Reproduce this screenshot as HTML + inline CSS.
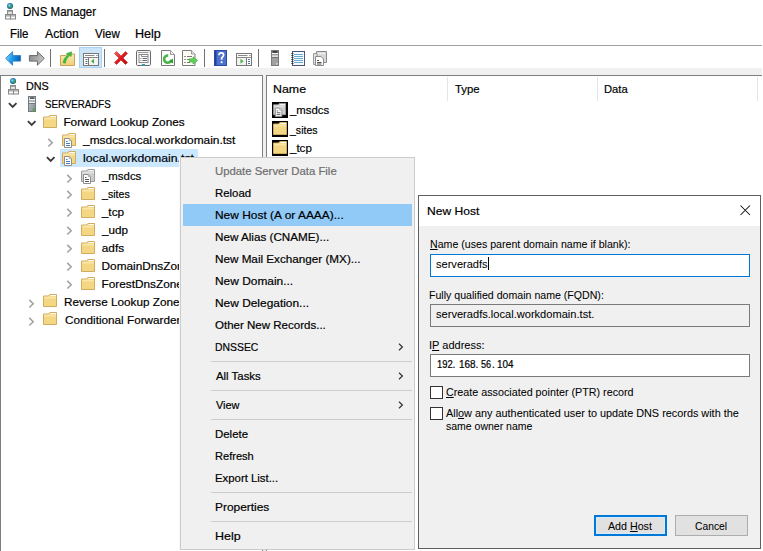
<!DOCTYPE html>
<html><head><meta charset="utf-8"><style>
html,body{margin:0;padding:0;}
body{width:763px;height:551px;overflow:hidden;position:relative;background:#fff;font-family:"Liberation Sans",sans-serif;}
.t{position:absolute;white-space:nowrap;-webkit-text-stroke:0.2px currentColor;}
.d{-webkit-text-stroke:0.05px currentColor;}
.r{position:absolute;}
u{text-decoration:underline;text-underline-offset:1px;}
</style></head><body>
<svg class="r" style="left:5px;top:3px" width="12" height="17" viewBox="0 0 12 17"><defs><radialGradient id="dg1" cx="0.4" cy="0.4" r="0.6"><stop offset="0" stop-color="#8fe0f0"/><stop offset="0.5" stop-color="#2f8cc0"/><stop offset="1" stop-color="#14506a"/></radialGradient></defs><circle cx="5" cy="3" r="3" fill="url(#dg1)"/><path d="M6.5 1.5L7.6 2.6L6.8 4.2L5.6 5.5L5 4.2Z" fill="#3fb04a" opacity="0.9"/><rect x="2.5" y="7.5" width="5" height="3.5" fill="#dcdcdc" stroke="#8a8a8a"/><path d="M3.5 8.6h1M5.5 8.6h1" stroke="#555" stroke-width="0.9"/><path d="M3.2 10.1h3.6" stroke="#fff"/><rect x="0.5" y="11.5" width="5" height="4.5" fill="#dcdcdc" stroke="#8a8a8a"/><path d="M1.5 12.8h1M3.5 12.8h1" stroke="#555" stroke-width="0.9"/><path d="M1.2 14.5h3.6" stroke="#fff" stroke-width="1.2"/><rect x="5.5" y="11.5" width="5" height="4.5" fill="#dcdcdc" stroke="#8a8a8a"/><path d="M6.5 12.8h1M8.5 12.8h1" stroke="#555" stroke-width="0.9"/><path d="M6.2 14.5h3.6" stroke="#fff" stroke-width="1.2"/></svg>
<div class="t" style="left:22.64px;top:3.94px;font-size:12px;line-height:17px;color:#000;transform:scaleX(0.9613);transform-origin:0 0;">DNS Manager</div>
<div class="t" style="left:9.64px;top:26.14px;font-size:12px;line-height:17px;color:#000;transform:scaleX(0.9556);transform-origin:0 0;">File</div>
<div class="t" style="left:44.80px;top:26.14px;font-size:12px;line-height:17px;color:#000;transform:scaleX(1.0152);transform-origin:0 0;">Action</div>
<div class="t" style="left:94.80px;top:26.14px;font-size:12px;line-height:17px;color:#000;transform:scaleX(0.9615);transform-origin:0 0;">View</div>
<div class="t" style="left:135.25px;top:26.14px;font-size:12px;line-height:17px;color:#000;transform:scaleX(1.0478);transform-origin:0 0;">Help</div>
<div class="r" style="left:0px;top:45px;width:762px;height:1px;background:#a0a0a0"></div>
<div class="r" style="left:0px;top:68px;width:762px;height:7px;background:#f0f0f0"></div>
<div class="r" style="left:0px;top:75px;width:263px;height:476px;background:#fff;border-left:1px solid #7f7f7f;border-top:1px solid #7f7f7f;border-right:1px solid #7f7f7f;box-sizing:border-box"></div>
<div class="r" style="left:263px;top:75px;width:3px;height:476px;background:#f0f0f0"></div>
<div class="r" style="left:266px;top:75px;width:496px;height:476px;background:#fff;border-left:1px solid #7f7f7f;border-top:1px solid #7f7f7f;box-sizing:border-box"></div>
<svg class="r" style="left:5px;top:51px" width="17" height="15" viewBox="0 0 17 15"><defs><linearGradient id="gb" x1="0" y1="0" x2="1" y2="0.3"><stop offset="0" stop-color="#a8e6ff"/><stop offset="0.45" stop-color="#23a6ee"/><stop offset="1" stop-color="#0660b8"/></linearGradient></defs><path d="M0.7 7.3L7.6 0.7V4.6H15.6V10.1H7.6V14.2Z" fill="url(#gb)" stroke="#3d82c4" stroke-width="1" stroke-linejoin="round"/></svg>
<svg class="r" style="left:28px;top:51px" width="17" height="15" viewBox="0 0 17 15"><defs><linearGradient id="gg" x1="0" y1="0" x2="1" y2="0.3"><stop offset="0" stop-color="#8a8a8a"/><stop offset="0.6" stop-color="#a9a9a9"/><stop offset="1" stop-color="#c8c8c8"/></linearGradient></defs><path d="M16.3 7.3L9.4 0.7V4.6H1.4V10.1H9.4V14.2Z" fill="url(#gg)" stroke="#666" stroke-width="1" stroke-linejoin="round"/></svg>
<div class="r" style="left:50px;top:49px;width:1px;height:18px;background:#6f6f6f"></div>
<svg class="r" style="left:60px;top:50px" width="15" height="16" viewBox="0 0 15 16"><defs><linearGradient id="gf" x1="0" y1="0" x2="0" y2="1"><stop offset="0" stop-color="#fbeab4"/><stop offset="1" stop-color="#f0cf78"/></linearGradient></defs><path d="M0.5 5.5H6L7.2 4H14.5V15.5H0.5Z" fill="url(#gf)" stroke="#c8a25a"/><path d="M3.2 12.8C3.6 9 5.5 6.5 7.8 5.2L6.6 3.6L11.6 1.8L11.2 6.6L9.9 5.6C8 6.9 6 9.4 5.4 13.2Z" fill="#3dbf3a" stroke="#2a9a2a" stroke-width="0.5"/></svg>
<div class="r" style="left:79px;top:47px;width:23px;height:21px;background:#cce4f7;border:1px solid #a8d3f5;box-sizing:border-box"></div>
<svg class="r" style="left:83px;top:53px" width="16" height="13" viewBox="0 0 16 13"><rect x="0.5" y="0.5" width="15" height="12" fill="#fff" stroke="#777"/><path d="M2 2.5H11.5M13 2.5H13.8M14.2 2.5H14.8" stroke="#888"/><path d="M1 4.5H15" stroke="#888"/><path d="M5.5 5V12" stroke="#777"/><path d="M2.5 6.5h2M2.5 8.5h2M2.5 10.5h2" stroke="#6a6a6a"/><rect x="6" y="5" width="9" height="7" fill="#f4f4f4"/><path d="M11 5.8L8 8.3L11 10.8Z" fill="#46b040"/></svg>
<div class="r" style="left:104px;top:49px;width:1px;height:18px;background:#6f6f6f"></div>
<svg class="r" style="left:113px;top:50px" width="16" height="16" viewBox="0 0 16 16"><defs><linearGradient id="gr" x1="0" y1="0" x2="1" y2="1"><stop offset="0" stop-color="#f46a6a"/><stop offset="0.5" stop-color="#e01818"/><stop offset="1" stop-color="#b50a0a"/></linearGradient></defs><path d="M1.5 3.5L3.5 1.5L8 6L12.5 1.5L14.5 3.5L10 8L14.5 12.5L12.5 14.5L8 10L3.5 14.5L1.5 12.5L6 8Z" fill="url(#gr)" stroke="#c42020" stroke-width="0.6" stroke-linejoin="round"/></svg>
<svg class="r" style="left:136px;top:50px" width="15" height="16" viewBox="0 0 15 16"><rect x="0.5" y="0.5" width="14" height="15" rx="1.2" fill="#f6f6f6" stroke="#6a6a6a"/><path d="M2 2.5H12.5" stroke="#9a9a9a"/><rect x="3" y="4.5" width="9" height="8" fill="#fff" stroke="#8a8a8a"/><path d="M5.5 4.5V6.5H12" stroke="#8a8a8a" fill="none"/><path d="M4.5 8.5h0.8M6.5 8.5h4.5M4.5 10.5h0.8M6.5 10.5h4.5" stroke="#5a6a7a"/><rect x="6" y="14" width="3" height="1.5" fill="#2a9fb8"/></svg>
<svg class="r" style="left:161px;top:50px" width="14" height="16" viewBox="0 0 14 16"><path d="M0.5 0.5H9.5L13.5 4.5V15.5H0.5Z" fill="#fff" stroke="#7a7a7a"/><path d="M9.5 0.5V4.5H13.5" fill="#f0f0f0" stroke="#9a9a9a"/><path d="M10.3 9.6A3.6 3.6 0 1 1 7.2 5.6" fill="none" stroke="#45b545" stroke-width="2.6"/><path d="M8.2 11.6L12.2 13.4L11.9 8.8Z" fill="#2f9a2f"/></svg>
<svg class="r" style="left:182px;top:50px" width="16" height="16" viewBox="0 0 16 16"><path d="M0.5 0.5H9.5L13 4V15.5H0.5Z" fill="#fffdf2" stroke="#7a7a7a"/><path d="M9.5 0.5V4H13" fill="#f0f0f0" stroke="#9a9a9a"/><path d="M2.5 6.5h1M2.5 9.5h1M2.5 12.5h1" stroke="#222"/><path d="M5 6.5h5M5 9.5h3M5 12.5h3" stroke="#777"/><path d="M7.5 8.8H11V6.8L15.6 10.4L11 14V12H7.5Z" fill="#5ed35a" stroke="#37a637" stroke-width="0.6"/></svg>
<div class="r" style="left:204px;top:49px;width:1px;height:18px;background:#6f6f6f"></div>
<svg class="r" style="left:214px;top:50px" width="13" height="16" viewBox="0 0 13 16"><rect x="0" y="0" width="13" height="16" fill="#4e72cc"/><rect x="0" y="0" width="2.5" height="16" fill="#23409a"/><rect x="0.5" y="0.5" width="12" height="15" fill="none" stroke="#2a4aa6"/><path d="M5 5.2C5 3.6 6 2.8 7.3 2.8C8.6 2.8 9.6 3.7 9.6 5C9.6 6.6 7.8 7.1 7.6 8.6V9.8" fill="none" stroke="#fff" stroke-width="1.7"/><rect x="6.7" y="11.3" width="1.8" height="1.8" fill="#fff"/></svg>
<svg class="r" style="left:236px;top:53px" width="16" height="13" viewBox="0 0 16 13"><rect x="0.5" y="0.5" width="15" height="12" fill="#fff" stroke="#777"/><path d="M2 2.5H11.5M13 2.5H13.8M14.2 2.5H14.8" stroke="#888"/><path d="M1 4.5H15" stroke="#888"/><rect x="1" y="5" width="9" height="7" fill="#f2f2f2"/><path d="M10.5 5V12" stroke="#777"/><path d="M12 6.5h2M12 8.5h2M12 10.5h2" stroke="#4a7aa8"/><path d="M4.5 5.8L7.5 8.3L4.5 10.8Z" fill="#46b040"/></svg>
<div class="r" style="left:258px;top:49px;width:1px;height:18px;background:#6f6f6f"></div>
<svg class="r" style="left:271px;top:50px" width="8" height="16" viewBox="0 0 8 16"><rect x="0" y="0" width="8" height="16" fill="#a0a0a0"/><rect x="0.5" y="0.5" width="7" height="15" fill="none" stroke="#7a7a7a"/><rect x="1.5" y="1.2" width="5" height="1.5" fill="#222"/><rect x="1" y="3" width="6" height="1.4" fill="#fafafa"/><rect x="1" y="4.6" width="6" height="0.6" fill="#555"/><rect x="1" y="5.4" width="6" height="1.4" fill="#f0f0f0"/><rect x="1" y="7" width="6" height="0.6" fill="#555"/><rect x="5" y="13" width="1.5" height="1.5" fill="#ddd"/></svg>
<svg class="r" style="left:291px;top:51px" width="14" height="15" viewBox="0 0 14 15"><rect x="1.5" y="0.5" width="12" height="14" fill="#f4fbff" stroke="#4a5578"/><path d="M3 3.5h9M3 5.5h9M3 7.5h9M3 9.5h9M3 11.5h9" stroke="#6aa8cc"/><path d="M0.3 2.5h2.2M0.3 4.5h2.2M0.3 6.5h2.2M0.3 8.5h2.2M0.3 10.5h2.2M0.3 12.5h2.2" stroke="#333" stroke-width="0.9"/></svg>
<svg class="r" style="left:313px;top:51px" width="14" height="15" viewBox="0 0 14 15"><path d="M3.5 0.5H13.5V11.5H3.5Z" fill="#d8d8d8" stroke="#8a8a8a"/><path d="M5 2.5H12" stroke="#f4f4f4"/><path d="M0.5 2.5H4V13.5H0.5Z" fill="#e4e4e4" stroke="#9a9a9a"/><path d="M2.5 5.5H8L10.5 8V14.5H2.5Z" fill="#fff" stroke="#8a8a8a"/><path d="M4 9.5h2M4 11.5h4.5M4 13h4.5" stroke="#555"/></svg>
<div class="r" style="left:60px;top:149px;width:138px;height:18px;background:#cce8ff"></div>
<svg class="r" style="left:8px;top:78px" width="12" height="17" viewBox="0 0 12 17"><defs><radialGradient id="dg2" cx="0.4" cy="0.4" r="0.6"><stop offset="0" stop-color="#8fe0f0"/><stop offset="0.5" stop-color="#2f8cc0"/><stop offset="1" stop-color="#14506a"/></radialGradient></defs><circle cx="5" cy="3" r="3" fill="url(#dg2)"/><path d="M6.5 1.5L7.6 2.6L6.8 4.2L5.6 5.5L5 4.2Z" fill="#3fb04a" opacity="0.9"/><rect x="2.5" y="7.5" width="5" height="3.5" fill="#dcdcdc" stroke="#8a8a8a"/><path d="M3.5 8.6h1M5.5 8.6h1" stroke="#555" stroke-width="0.9"/><path d="M3.2 10.1h3.6" stroke="#fff"/><rect x="0.5" y="11.5" width="5" height="4.5" fill="#dcdcdc" stroke="#8a8a8a"/><path d="M1.5 12.8h1M3.5 12.8h1" stroke="#555" stroke-width="0.9"/><path d="M1.2 14.5h3.6" stroke="#fff" stroke-width="1.2"/><rect x="5.5" y="11.5" width="5" height="4.5" fill="#dcdcdc" stroke="#8a8a8a"/><path d="M6.5 12.8h1M8.5 12.8h1" stroke="#555" stroke-width="0.9"/><path d="M6.2 14.5h3.6" stroke="#fff" stroke-width="1.2"/></svg>
<div class="t" style="left:25.68px;top:77.71px;font-size:11.8px;line-height:17px;color:#000;transform:scaleX(0.9167);transform-origin:0 0;">DNS</div>
<svg class="r" style="left:8px;top:102px" width="10" height="7" viewBox="0 0 10 7"><path d="M0.9 1.1L4.7 4.9L8.5 1.1" fill="none" stroke="#3a3a3a" stroke-width="1.8"/></svg>
<svg class="r" style="left:28px;top:96px" width="8" height="16" viewBox="0 0 8 16"><defs><linearGradient id="sg" x1="0" y1="0" x2="1" y2="1"><stop offset="0" stop-color="#c5cdd0"/><stop offset="1" stop-color="#7f898d"/></linearGradient></defs><rect x="0.5" y="0.5" width="7" height="15" fill="url(#sg)" stroke="#737b7f"/><rect x="2" y="1.5" width="4" height="1.2" fill="#333"/><rect x="1" y="3" width="6" height="1.6" fill="#f6f8f9"/><rect x="1" y="4.7" width="6" height="0.7" fill="#5a6064"/><rect x="1" y="5.6" width="6" height="1.6" fill="#eef1f2"/><rect x="1" y="7.3" width="6" height="0.7" fill="#5a6064"/><rect x="4.8" y="12.6" width="2" height="2" fill="#49a843"/></svg>
<div class="t" style="left:45.20px;top:95.71px;font-size:11.8px;line-height:17px;color:#000;transform:scaleX(0.8237);transform-origin:0 0;">SERVERADFS</div>
<svg class="r" style="left:27px;top:120px" width="10" height="7" viewBox="0 0 10 7"><path d="M0.9 1.1L4.7 4.9L8.5 1.1" fill="none" stroke="#3a3a3a" stroke-width="1.8"/></svg>
<svg class="r" style="left:43px;top:115px" width="14" height="13" viewBox="0 0 14 13"><path d="M0.5 2H5.5L6.8 0.5H13.5V12.5H0.5Z" fill="#f3d782" stroke="#d0ab60"/><path d="M1 2.6H13V4.5H1Z" fill="#fbe9b2" opacity="0.8"/><path d="M7.8 1.1H12.9V2.1H7.2Z" fill="#fff"/></svg>
<div class="t" style="left:63.40px;top:113.71px;font-size:11.8px;line-height:17px;color:#000;">Forward Lookup Zones</div>
<svg class="r" style="left:47px;top:138px" width="7" height="10" viewBox="0 0 7 10"><path d="M1.3 0.9L5.2 4.7L1.3 8.5" fill="none" stroke="#a3a3a3" stroke-width="1.6"/></svg>
<svg class="r" style="left:62px;top:133px" width="15" height="15" viewBox="0 0 15 15"><path d="M0.5 2H5.5L6.8 0.5H13.5V12.5H0.5Z" fill="#f3d782" stroke="#d0ab60"/><path d="M1 2.6H13V4.5H1Z" fill="#fbe9b2" opacity="0.8"/><path d="M7.8 1.1H12.9V2.1H7.2Z" fill="#fff"/><path d="M2.5 5.5H7.3L9.5 7.7V14.5H2.5Z" fill="#fff" stroke="#8e8e8e"/><path d="M7.3 5.5V7.7H9.5" fill="#e8e8e8" stroke="#a8a8a8"/><path d="M4 8.5H5.5M4 10.5H8M4 12.5H8" stroke="#3d7fc1"/></svg>
<div class="t" style="left:83.00px;top:131.71px;font-size:11.8px;line-height:17px;color:#000;transform:scaleX(1.0106);transform-origin:0 0;">_msdcs.local.workdomain.tst</div>
<svg class="r" style="left:46px;top:156px" width="10" height="7" viewBox="0 0 10 7"><path d="M0.9 1.1L4.7 4.9L8.5 1.1" fill="none" stroke="#3a3a3a" stroke-width="1.8"/></svg>
<svg class="r" style="left:62px;top:151px" width="15" height="15" viewBox="0 0 15 15"><path d="M0.5 2H5.5L6.8 0.5H13.5V12.5H0.5Z" fill="#f3d782" stroke="#d0ab60"/><path d="M1 2.6H13V4.5H1Z" fill="#fbe9b2" opacity="0.8"/><path d="M7.8 1.1H12.9V2.1H7.2Z" fill="#fff"/><path d="M2.5 5.5H7.3L9.5 7.7V14.5H2.5Z" fill="#fff" stroke="#8e8e8e"/><path d="M7.3 5.5V7.7H9.5" fill="#e8e8e8" stroke="#a8a8a8"/><path d="M4 8.5H5.5M4 10.5H8M4 12.5H8" stroke="#3d7fc1"/></svg>
<div class="t" style="left:82.76px;top:149.71px;font-size:11.8px;line-height:17px;color:#000;transform:scaleX(1.0377);transform-origin:0 0;">local.workdomain.tst</div>
<svg class="r" style="left:66px;top:174px" width="7" height="10" viewBox="0 0 7 10"><path d="M1.3 0.9L5.2 4.7L1.3 8.5" fill="none" stroke="#a3a3a3" stroke-width="1.6"/></svg>
<svg class="r" style="left:81px;top:169px" width="15" height="15" viewBox="0 0 15 15"><path d="M0.5 2H5.5L6.8 0.5H13.5V12.5H0.5Z" fill="#cdcdcd" stroke="#9c9c9c"/><path d="M1 2.6H13V4.5H1Z" fill="#e6e6e6" opacity="0.8"/><path d="M7.8 1.1H12.9V2.1H7.2Z" fill="#f4f4f4"/><path d="M2.5 5.5H7.3L9.5 7.7V14.5H2.5Z" fill="#fff" stroke="#8e8e8e"/><path d="M7.3 5.5V7.7H9.5" fill="#e8e8e8" stroke="#a8a8a8"/><path d="M4 8.5H5.5M4 10.5H8M4 12.5H8" stroke="#555"/></svg>
<div class="t" style="left:101.80px;top:167.71px;font-size:11.8px;line-height:17px;color:#000;transform:scaleX(0.9675);transform-origin:0 0;">_msdcs</div>
<svg class="r" style="left:66px;top:189.7px" width="7" height="10" viewBox="0 0 7 10"><path d="M1.3 0.9L5.2 4.7L1.3 8.5" fill="none" stroke="#a3a3a3" stroke-width="1.6"/></svg>
<svg class="r" style="left:81px;top:187.2px" width="14" height="13" viewBox="0 0 14 13"><path d="M0.5 2H5.5L6.8 0.5H13.5V12.5H0.5Z" fill="#f3d782" stroke="#d0ab60"/><path d="M1 2.6H13V4.5H1Z" fill="#fbe9b2" opacity="0.8"/><path d="M7.8 1.1H12.9V2.1H7.2Z" fill="#fff"/></svg>
<div class="t" style="left:101.80px;top:185.71px;font-size:11.8px;line-height:17px;color:#000;transform:scaleX(0.9000);transform-origin:0 0;">_sites</div>
<svg class="r" style="left:66px;top:207.7px" width="7" height="10" viewBox="0 0 7 10"><path d="M1.3 0.9L5.2 4.7L1.3 8.5" fill="none" stroke="#a3a3a3" stroke-width="1.6"/></svg>
<svg class="r" style="left:81px;top:205.2px" width="14" height="13" viewBox="0 0 14 13"><path d="M0.5 2H5.5L6.8 0.5H13.5V12.5H0.5Z" fill="#f3d782" stroke="#d0ab60"/><path d="M1 2.6H13V4.5H1Z" fill="#fbe9b2" opacity="0.8"/><path d="M7.8 1.1H12.9V2.1H7.2Z" fill="#fff"/></svg>
<div class="t" style="left:101.80px;top:203.71px;font-size:11.8px;line-height:17px;color:#000;">_tcp</div>
<svg class="r" style="left:66px;top:225.7px" width="7" height="10" viewBox="0 0 7 10"><path d="M1.3 0.9L5.2 4.7L1.3 8.5" fill="none" stroke="#a3a3a3" stroke-width="1.6"/></svg>
<svg class="r" style="left:81px;top:223.2px" width="14" height="13" viewBox="0 0 14 13"><path d="M0.5 2H5.5L6.8 0.5H13.5V12.5H0.5Z" fill="#f3d782" stroke="#d0ab60"/><path d="M1 2.6H13V4.5H1Z" fill="#fbe9b2" opacity="0.8"/><path d="M7.8 1.1H12.9V2.1H7.2Z" fill="#fff"/></svg>
<div class="t" style="left:101.80px;top:221.71px;font-size:11.8px;line-height:17px;color:#000;transform:scaleX(0.9923);transform-origin:0 0;">_udp</div>
<svg class="r" style="left:66px;top:243.7px" width="7" height="10" viewBox="0 0 7 10"><path d="M1.3 0.9L5.2 4.7L1.3 8.5" fill="none" stroke="#a3a3a3" stroke-width="1.6"/></svg>
<svg class="r" style="left:81px;top:241.2px" width="14" height="13" viewBox="0 0 14 13"><path d="M0.5 2H5.5L6.8 0.5H13.5V12.5H0.5Z" fill="#f3d782" stroke="#d0ab60"/><path d="M1 2.6H13V4.5H1Z" fill="#fbe9b2" opacity="0.8"/><path d="M7.8 1.1H12.9V2.1H7.2Z" fill="#fff"/></svg>
<div class="t" style="left:101.80px;top:239.71px;font-size:11.8px;line-height:17px;color:#000;">adfs</div>
<svg class="r" style="left:66px;top:261.7px" width="7" height="10" viewBox="0 0 7 10"><path d="M1.3 0.9L5.2 4.7L1.3 8.5" fill="none" stroke="#a3a3a3" stroke-width="1.6"/></svg>
<svg class="r" style="left:81px;top:259.2px" width="14" height="13" viewBox="0 0 14 13"><path d="M0.5 2H5.5L6.8 0.5H13.5V12.5H0.5Z" fill="#f3d782" stroke="#d0ab60"/><path d="M1 2.6H13V4.5H1Z" fill="#fbe9b2" opacity="0.8"/><path d="M7.8 1.1H12.9V2.1H7.2Z" fill="#fff"/></svg>
<div class="t" style="left:101.60px;top:257.71px;font-size:11.8px;line-height:17px;color:#000;">DomainDnsZones</div>
<svg class="r" style="left:66px;top:279.7px" width="7" height="10" viewBox="0 0 7 10"><path d="M1.3 0.9L5.2 4.7L1.3 8.5" fill="none" stroke="#a3a3a3" stroke-width="1.6"/></svg>
<svg class="r" style="left:81px;top:277.2px" width="14" height="13" viewBox="0 0 14 13"><path d="M0.5 2H5.5L6.8 0.5H13.5V12.5H0.5Z" fill="#f3d782" stroke="#d0ab60"/><path d="M1 2.6H13V4.5H1Z" fill="#fbe9b2" opacity="0.8"/><path d="M7.8 1.1H12.9V2.1H7.2Z" fill="#fff"/></svg>
<div class="t" style="left:101.60px;top:275.71px;font-size:11.8px;line-height:17px;color:#000;">ForestDnsZones</div>
<svg class="r" style="left:28px;top:299px" width="7" height="10" viewBox="0 0 7 10"><path d="M1.3 0.9L5.2 4.7L1.3 8.5" fill="none" stroke="#a3a3a3" stroke-width="1.6"/></svg>
<svg class="r" style="left:43px;top:294px" width="14" height="13" viewBox="0 0 14 13"><path d="M0.5 2H5.5L6.8 0.5H13.5V12.5H0.5Z" fill="#f3d782" stroke="#d0ab60"/><path d="M1 2.6H13V4.5H1Z" fill="#fbe9b2" opacity="0.8"/><path d="M7.8 1.1H12.9V2.1H7.2Z" fill="#fff"/></svg>
<div class="t" style="left:63.80px;top:293.71px;font-size:11.8px;line-height:17px;color:#000;transform:scaleX(0.9950);transform-origin:0 0;">Reverse Lookup Zones</div>
<svg class="r" style="left:28px;top:317px" width="7" height="10" viewBox="0 0 7 10"><path d="M1.3 0.9L5.2 4.7L1.3 8.5" fill="none" stroke="#a3a3a3" stroke-width="1.6"/></svg>
<svg class="r" style="left:43px;top:312px" width="14" height="13" viewBox="0 0 14 13"><path d="M0.5 2H5.5L6.8 0.5H13.5V12.5H0.5Z" fill="#f3d782" stroke="#d0ab60"/><path d="M1 2.6H13V4.5H1Z" fill="#fbe9b2" opacity="0.8"/><path d="M7.8 1.1H12.9V2.1H7.2Z" fill="#fff"/></svg>
<div class="t" style="left:64.80px;top:311.71px;font-size:11.8px;line-height:17px;color:#000;transform:scaleX(0.9950);transform-origin:0 0;">Conditional Forwarders</div>
<div class="t" style="left:273.35px;top:80.51px;font-size:11.8px;line-height:17px;color:#000;transform:scaleX(1.0500);transform-origin:0 0;">Name</div>
<div class="r" style="left:447px;top:77px;width:1px;height:24px;background:#e5e5e5"></div>
<div class="t" style="left:455.20px;top:81.01px;font-size:11.8px;line-height:17px;color:#000;transform:scaleX(0.9640);transform-origin:0 0;">Type</div>
<div class="r" style="left:597px;top:77px;width:1px;height:24px;background:#e5e5e5"></div>
<div class="t" style="left:603.65px;top:81.01px;font-size:11.8px;line-height:17px;color:#000;transform:scaleX(0.9500);transform-origin:0 0;">Data</div>
<div class="r" style="left:757px;top:77px;width:1px;height:24px;background:#e5e5e5"></div>
<svg class="r" style="left:272px;top:102px" width="16" height="16" viewBox="0 0 16 16"><rect width="16" height="16" fill="#000"/><g transform="translate(1,1) scale(0.93)"><path d="M0.5 2H5.5L6.8 0.5H13.5V12.5H0.5Z" fill="#cdcdcd" stroke="#9c9c9c"/><path d="M1 2.6H13V4.5H1Z" fill="#e6e6e6" opacity="0.8"/><path d="M7.8 1.1H12.9V2.1H7.2Z" fill="#f4f4f4"/><path d="M2.5 5.5H7.3L9.5 7.7V14.5H2.5Z" fill="#fff" stroke="#8e8e8e"/><path d="M7.3 5.5V7.7H9.5" fill="#e8e8e8" stroke="#a8a8a8"/><path d="M4 8.5H5.5M4 10.5H8M4 12.5H8" stroke="#555"/></g></svg>
<div class="t" style="left:290.10px;top:101.81px;font-size:11.8px;line-height:17px;color:#000;transform:scaleX(0.9650);transform-origin:0 0;">_msdcs</div>
<svg class="r" style="left:272px;top:121px" width="16" height="16" viewBox="0 0 16 16"><rect width="16" height="16" fill="#000"/><g transform="translate(1,1) scale(1)"><path d="M0.5 2H5.5L6.8 0.5H13.5V12.5H0.5Z" fill="#f3d782" stroke="#d0ab60"/><path d="M1 2.6H13V4.5H1Z" fill="#fbe9b2" opacity="0.8"/><path d="M7.8 1.1H12.9V2.1H7.2Z" fill="#fff"/></g></svg>
<div class="t" style="left:290.10px;top:121.91px;font-size:11.8px;line-height:17px;color:#000;transform:scaleX(0.8935);transform-origin:0 0;">_sites</div>
<svg class="r" style="left:272px;top:140px" width="16" height="16" viewBox="0 0 16 16"><rect width="16" height="16" fill="#000"/><g transform="translate(1,1) scale(1)"><path d="M0.5 2H5.5L6.8 0.5H13.5V12.5H0.5Z" fill="#f3d782" stroke="#d0ab60"/><path d="M1 2.6H13V4.5H1Z" fill="#fbe9b2" opacity="0.8"/><path d="M7.8 1.1H12.9V2.1H7.2Z" fill="#fff"/></g></svg>
<div class="t" style="left:290.10px;top:139.81px;font-size:11.8px;line-height:17px;color:#000;transform:scaleX(0.9773);transform-origin:0 0;">_tcp</div>
<div class="r" style="left:179px;top:157px;width:1px;height:393px;background:#f7f7f7"></div>
<div class="r" style="left:180px;top:157px;width:235px;height:393px;background:#f0f0f0;border:1px solid #cccccc;box-sizing:border-box"></div>
<div class="r" style="left:183px;top:204px;width:229px;height:22px;background:#91c9f7"></div>
<div class="t" style="left:214.64px;top:162.81px;font-size:11.8px;line-height:17px;color:#6d6d6d;transform:scaleX(0.9616);transform-origin:0 0;">Update Server Data File</div>
<div class="t" style="left:214.64px;top:184.81px;font-size:11.8px;line-height:17px;color:#000;transform:scaleX(0.9639);transform-origin:0 0;">Reload</div>
<div class="t" style="left:214.59px;top:206.81px;font-size:11.8px;line-height:17px;color:#000;transform:scaleX(1.0119);transform-origin:0 0;">New Host (A or AAAA)...</div>
<div class="t" style="left:214.61px;top:228.81px;font-size:11.8px;line-height:17px;color:#000;transform:scaleX(0.9895);transform-origin:0 0;">New Alias (CNAME)...</div>
<div class="t" style="left:214.61px;top:250.81px;font-size:11.8px;line-height:17px;color:#000;transform:scaleX(0.9910);transform-origin:0 0;">New Mail Exchanger (MX)...</div>
<div class="t" style="left:214.59px;top:272.81px;font-size:11.8px;line-height:17px;color:#000;transform:scaleX(1.0105);transform-origin:0 0;">New Domain...</div>
<div class="t" style="left:214.59px;top:294.81px;font-size:11.8px;line-height:17px;color:#000;transform:scaleX(1.0099);transform-origin:0 0;">New Delegation...</div>
<div class="t" style="left:214.90px;top:316.81px;font-size:11.8px;line-height:17px;color:#000;transform:scaleX(0.9770);transform-origin:0 0;">Other New Records...</div>
<div class="t" style="left:214.72px;top:338.81px;font-size:11.8px;line-height:17px;color:#000;transform:scaleX(0.8812);transform-origin:0 0;">DNSSEC</div>
<svg class="r" style="left:398px;top:343.3px" width="6" height="8" viewBox="0 0 6 8"><path d="M1 0.8L4.4 4L1 7.2" fill="none" stroke="#333" stroke-width="1.2"/></svg>
<div class="t" style="left:215.60px;top:367.81px;font-size:11.8px;line-height:17px;color:#000;transform:scaleX(0.9652);transform-origin:0 0;">All Tasks</div>
<svg class="r" style="left:398px;top:372.3px" width="6" height="8" viewBox="0 0 6 8"><path d="M1 0.8L4.4 4L1 7.2" fill="none" stroke="#333" stroke-width="1.2"/></svg>
<div class="t" style="left:215.60px;top:396.81px;font-size:11.8px;line-height:17px;color:#000;transform:scaleX(0.9269);transform-origin:0 0;">View</div>
<svg class="r" style="left:398px;top:401.3px" width="6" height="8" viewBox="0 0 6 8"><path d="M1 0.8L4.4 4L1 7.2" fill="none" stroke="#333" stroke-width="1.2"/></svg>
<div class="t" style="left:214.63px;top:425.81px;font-size:11.8px;line-height:17px;color:#000;transform:scaleX(0.9697);transform-origin:0 0;">Delete</div>
<div class="t" style="left:214.66px;top:447.81px;font-size:11.8px;line-height:17px;color:#000;transform:scaleX(0.9375);transform-origin:0 0;">Refresh</div>
<div class="t" style="left:214.64px;top:469.81px;font-size:11.8px;line-height:17px;color:#000;transform:scaleX(0.9625);transform-origin:0 0;">Export List...</div>
<div class="t" style="left:214.59px;top:498.81px;font-size:11.8px;line-height:17px;color:#000;transform:scaleX(1.0096);transform-origin:0 0;">Properties</div>
<div class="t" style="left:214.54px;top:527.81px;font-size:11.8px;line-height:17px;color:#000;transform:scaleX(1.0565);transform-origin:0 0;">Help</div>
<div class="r" style="left:211px;top:361px;width:201px;height:1px;background:#cdcdcd"></div>
<div class="r" style="left:211px;top:390px;width:201px;height:1px;background:#cdcdcd"></div>
<div class="r" style="left:211px;top:419px;width:201px;height:1px;background:#cdcdcd"></div>
<div class="r" style="left:211px;top:492px;width:201px;height:1px;background:#cdcdcd"></div>
<div class="r" style="left:211px;top:521px;width:201px;height:1px;background:#cdcdcd"></div>
<div class="r" style="left:418px;top:195px;width:343px;height:354px;background:#f0f0f0;border:1px solid #5f5f5f;box-sizing:border-box"></div>
<div class="r" style="left:419px;top:196px;width:341px;height:30px;background:#fff"></div>
<div class="t" style="left:426.58px;top:202.81px;font-size:11.8px;line-height:17px;color:#000;transform:scaleX(1.0220);transform-origin:0 0;">New Host</div>
<svg class="r" style="left:740px;top:205px" width="11" height="11" viewBox="0 0 11 11"><path d="M0.5 0.5L10 10M10 0.5L0.5 10" stroke="#111" stroke-width="1.05"/></svg>
<div class="t d" style="left:430.00px;top:236.86px;font-size:10.5px;line-height:15px;color:#000;transform:scaleX(1.0106);transform-origin:0 0;"><u>N</u>ame (uses parent domain name if blank):</div>
<div class="r" style="left:430px;top:254px;width:320px;height:23px;background:#fff;border:1px solid #0078d7;box-sizing:border-box"></div>
<div class="t d" style="left:435.50px;top:256.96px;font-size:10.5px;line-height:15px;color:#000;transform:scaleX(1.0531);transform-origin:0 0;">serveradfs</div>
<div class="r" style="left:488px;top:257px;width:1px;height:13px;background:#000"></div>
<div class="t d" style="left:428.69px;top:287.86px;font-size:10.5px;line-height:15px;color:#000;transform:scaleX(1.0087);transform-origin:0 0;">Fully qualified domain name (FQDN):</div>
<div class="r" style="left:430px;top:304px;width:320px;height:23px;background:#f0f0f0;border:1px solid #7a7a7a;box-sizing:border-box"></div>
<div class="t d" style="left:435.50px;top:307.26px;font-size:10.5px;line-height:15px;color:#000;transform:scaleX(1.0557);transform-origin:0 0;">serveradfs.local.workdomain.tst.</div>
<div class="t d" style="left:428.65px;top:337.96px;font-size:10.5px;line-height:15px;color:#000;transform:scaleX(1.0490);transform-origin:0 0;">I<u>P</u> address:</div>
<div class="r" style="left:430px;top:354px;width:320px;height:23px;background:#fff;border:1px solid #7a7a7a;box-sizing:border-box"></div>
<div class="t" style="left:437.16px;top:357.84px;font-size:10px;line-height:14px;color:#000;transform:scaleX(0.9400);transform-origin:0 0;">192</div>
<div class="t" style="left:459.21px;top:357.84px;font-size:10px;line-height:14px;color:#000;transform:scaleX(0.9933);transform-origin:0 0;">168</div>
<div class="t" style="left:481.20px;top:357.84px;font-size:10px;line-height:14px;color:#000;transform:scaleX(0.9091);transform-origin:0 0;">56</div>
<div class="t" style="left:497.21px;top:357.84px;font-size:10px;line-height:14px;color:#000;transform:scaleX(0.9875);transform-origin:0 0;">104</div>
<div class="t" style="left:452.40px;top:357.84px;font-size:10px;line-height:14px;color:#000;">.</div>
<div class="t" style="left:475.40px;top:357.84px;font-size:10px;line-height:14px;color:#000;">.</div>
<div class="t" style="left:492.00px;top:357.84px;font-size:10px;line-height:14px;color:#000;">.</div>
<div class="r" style="left:430px;top:386px;width:13px;height:13px;background:#fff;border:1px solid #333;box-sizing:border-box"></div>
<div class="t d" style="left:445.80px;top:384.96px;font-size:10.5px;line-height:15px;color:#000;transform:scaleX(1.0235);transform-origin:0 0;"><u>C</u>reate associated pointer (PTR) record</div>
<div class="r" style="left:430px;top:407px;width:13px;height:13px;background:#fff;border:1px solid #333;box-sizing:border-box"></div>
<div class="t d" style="left:446.00px;top:405.86px;font-size:10.5px;line-height:15px;color:#000;transform:scaleX(1.0343);transform-origin:0 0;">All<u>o</u>w any authenticated user to update DNS records with the</div>
<div class="t d" style="left:446.00px;top:418.76px;font-size:10.5px;line-height:15px;color:#000;">same owner name</div>
<div class="r" style="left:594px;top:515px;width:73px;height:21px;background:#e1e1e1;border:2px solid #0078d7;box-sizing:border-box"></div>
<div class="r" style="left:596px;top:517px;width:69px;height:17px;border:1px solid #d6ecfb;box-sizing:border-box"></div>
<div class="t d" style="left:608.30px;top:518.96px;font-size:10.5px;line-height:15px;color:#000;transform:scaleX(1.0163);transform-origin:0 0;">Add <u>H</u>ost</div>
<div class="r" style="left:675px;top:515px;width:73px;height:21px;background:#e1e1e1;border:1px solid #adadad;box-sizing:border-box"></div>
<div class="t d" style="left:694.60px;top:518.96px;font-size:10.5px;line-height:15px;color:#000;transform:scaleX(0.9812);transform-origin:0 0;">Cancel</div>
</body></html>
